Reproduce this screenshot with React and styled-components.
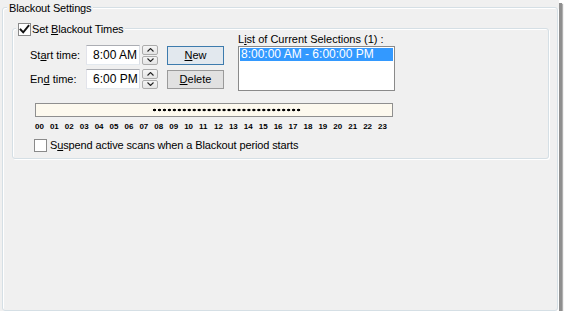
import React from "react";
import styled, { createGlobalStyle } from "styled-components";

const GlobalStyle = createGlobalStyle`
  html, body { margin: 0; padding: 0; background: #ffffff; }
  body {
    font-family: "Liberation Sans", Arial, sans-serif;
    font-size: 11px;
    color: #000;
  }
  * { box-sizing: border-box; }
`;

const HOUR_W = 358 / 24;

const Window = styled.div`
  width: 559px;
  height: 311px;
  background: #f0f0f0;
  padding: 7px 1px 0 2px;
  display: flex;
  flex-direction: column;
  box-shadow: 3px 3px 0 0 #8f8f8f, 4px 4px 1px 0 #b0b0b0;
`;

const GroupBox = styled.div`
  position: relative;
  border: 1px solid #d5dfe5;
  border-radius: 3px;
  box-shadow: 1px 1px 0 #ffffff, inset 1px 1px 0 #ffffff;
  padding: ${(p) => p.$pad};
  ${(p) => (p.$grow ? "flex: 1;" : "")}
`;

const GroupTitle = styled.div`
  position: absolute;
  top: ${(p) => p.$top}px;
  left: ${(p) => p.$left}px;
  background: #f0f0f0;
  padding: 0 2px;
  line-height: 13px;
  display: flex;
  align-items: center;
  gap: ${(p) => p.$gap || 0}px;
  white-space: nowrap;
  letter-spacing: -0.15px;
`;

const U = styled.span`
  text-decoration: underline;
  text-underline-offset: 1px;
`;

const Box = styled.span`
  width: 13px;
  height: 13px;
  flex: 0 0 13px;
  border: 1px solid #8a8a8a;
  background: #ffffff;
  display: inline-flex;
  align-items: center;
  justify-content: center;
`;

const CheckBox = ({ checked }) => (
  <Box>
    {checked && (
      <svg width="11" height="11" viewBox="0 0 11 11">
        <polyline
          points="1.5,5.5 4.2,8.3 9.5,1.8"
          fill="none"
          stroke="#111"
          strokeWidth="1.9"
          strokeLinecap="square"
        />
      </svg>
    )}
  </Box>
);

const TopSection = styled.div`
  display: flex;
  align-items: flex-start;
  padding-top: 4px;
`;

const TimeGrid = styled.div`
  margin-top: 12px;
  display: grid;
  grid-template-columns: 54px 54px 16px;
  column-gap: 2px;
  row-gap: 4px;
  align-items: center;
`;

const FieldLabel = styled.span`
  white-space: nowrap;
  line-height: 13px;
`;

const Field = styled.div`
  height: 20px;
  border: 1px solid #abadb3;
  border-color: #abadb3 #dbdfe6 #e3e9ef #e2e3ea;
  background: #fff;
  display: flex;
  align-items: center;
  padding-left: 6px;
  font-size: 12px;
  white-space: pre;
`;

const Spinner = styled.div`
  height: 20px;
  display: flex;
  flex-direction: column;
  gap: 1px;
`;

const SpinBtn = styled.div`
  flex: 1;
  border: 1px solid #acacac;
  border-radius: 2px;
  background: linear-gradient(#f5f5f5, #e4e4e4);
  display: flex;
  align-items: center;
  justify-content: center;
`;

const Arrow = ({ down }) => (
  <svg width="7" height="4" viewBox="0 0 7 4">
    <polyline
      points={down ? "0.5,0.5 3.5,3.5 6.5,0.5" : "0.5,3.5 3.5,0.5 6.5,3.5"}
      fill="none"
      stroke="#222"
      strokeWidth="1.1"
    />
  </svg>
);

const ButtonCol = styled.div`
  margin-top: 13px;
  margin-left: 9px;
  display: flex;
  flex-direction: column;
  gap: 5px;
`;

const Button = styled.div`
  width: 57px;
  height: 19px;
  border: 1px solid ${(p) => (p.$default ? "#3d7bad" : "#9a9a9a")};
  background: ${(p) => (p.$default ? "#e2e8ee" : "#e1e1e1")};
  display: flex;
  align-items: center;
  justify-content: center;
  line-height: 13px;
`;

const ListCol = styled.div`
  margin-left: 14px;
  display: flex;
  flex-direction: column;
`;

const ListLabel = styled.div`
  line-height: 13px;
  white-space: nowrap;
`;

const ListBox = styled.div`
  width: 157px;
  height: 45px;
  border: 1px solid #8a8a8a;
  background: #fff;
  padding: 1px;
`;

const ListItem = styled.div`
  height: 13px;
  line-height: 13px;
  padding-left: 1px;
  font-size: 12px;
  background: ${(p) => (p.$selected ? "#3399ff" : "transparent")};
  color: ${(p) => (p.$selected ? "#fff" : "#000")};
  white-space: nowrap;
`;

const Timeline = styled.div`
  margin-top: 12px;
  margin-left: 5px;
  width: 358px;
`;

const Bar = styled.div`
  height: 14px;
  border: 1px solid #8f8f8f;
  background: #fdf9ee;
  display: flex;
  align-items: center;
`;

const Dots = styled.div`
  height: 4px;
  background-image: radial-gradient(circle at center, #000 1.15px, rgba(0, 0, 0, 0) 1.6px);
  background-size: ${HOUR_W / 3}px 4px;
  background-repeat: repeat-x;
`;

const HourRow = styled.div`
  margin-top: 5px;
  display: grid;
  grid-template-columns: repeat(24, 1fr);
  font-size: 8px;
  line-height: 10px;
  font-weight: bold;
  color: #000;
`;

const Hour = styled.span`
  white-space: nowrap;
`;

const OptionRow = styled.div`
  margin-top: 7px;
  margin-left: 4px;
  display: flex;
  align-items: center;
  gap: 3px;
  line-height: 13px;
  white-space: nowrap;
  letter-spacing: -0.12px;
`;

const hours = Array.from({ length: 24 }, (_, i) => String(i).padStart(2, "0"));
const blackout = { start: 8, end: 18 };

export default function App() {
  const dotsLeft = blackout.start * HOUR_W - 3;
  const dotsWidth = (blackout.end - blackout.start) * HOUR_W;
  return (
    <>
      <GlobalStyle />
      <Window>
        <GroupBox $grow $pad="20px 8px 0 9px">
          <GroupTitle $top={-6} $left={4}>Blackout Settings</GroupTitle>
          <GroupBox $pad="0 0 6px 17px">
            <GroupTitle $top={-6} $left={3} $gap={1}>
              <CheckBox checked />
              <span>
                Set <U>B</U>lackout Times
              </span>
            </GroupTitle>
            <TopSection>
              <TimeGrid>
                <FieldLabel>
                  St<U>a</U>rt time:
                </FieldLabel>
                <Field>8:00 AM</Field>
                <Spinner>
                  <SpinBtn>
                    <Arrow />
                  </SpinBtn>
                  <SpinBtn>
                    <Arrow down />
                  </SpinBtn>
                </Spinner>
                <FieldLabel>
                  En<U>d</U> time:
                </FieldLabel>
                <Field>6:00 PM</Field>
                <Spinner>
                  <SpinBtn>
                    <Arrow />
                  </SpinBtn>
                  <SpinBtn>
                    <Arrow down />
                  </SpinBtn>
                </Spinner>
              </TimeGrid>
              <ButtonCol>
                <Button $default>
                  <span>
                    <U>N</U>ew
                  </span>
                </Button>
                <Button>
                  <span>
                    <U>D</U>elete
                  </span>
                </Button>
              </ButtonCol>
              <ListCol>
                <ListLabel>
                  L<U>i</U>st of Current Selections (1) :
                </ListLabel>
                <ListBox>
                  <ListItem $selected>8:00:00 AM - 6:00:00 PM</ListItem>
                </ListBox>
              </ListCol>
            </TopSection>
            <Timeline>
              <Bar>
                <Dots style={{ marginLeft: dotsLeft, width: dotsWidth }} />
              </Bar>
              <HourRow>
                {hours.map((h) => (
                  <Hour key={h}>{h}</Hour>
                ))}
              </HourRow>
            </Timeline>
            <OptionRow>
              <CheckBox />
              <span>
                S<U>u</U>spend active scans when a Blackout period starts
              </span>
            </OptionRow>
          </GroupBox>
        </GroupBox>
      </Window>
    </>
  );
}
